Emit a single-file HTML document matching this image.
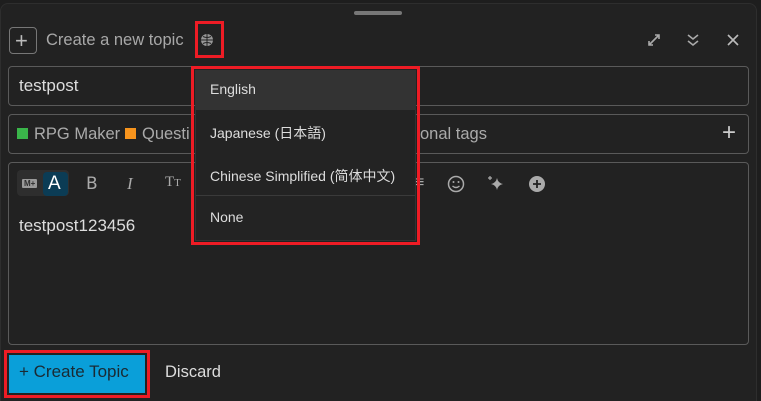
<!DOCTYPE html>
<html><head><meta charset="utf-8"><style>
*{box-sizing:border-box;margin:0;padding:0}
html,body{width:761px;height:401px;overflow:hidden}
body{background:#1e1e1e;font-family:"Liberation Sans","Noto Sans CJK SC",sans-serif;position:relative;color:#ddd}
.panel{position:absolute;left:0;top:3px;width:757px;height:406px;background:#222;border:1px solid #2e2e2e;border-radius:8px}
.abs{position:absolute}
.box{position:absolute;border:1px solid #5a5a5a;border-radius:4px}
.t{position:absolute;white-space:nowrap}
.red{position:absolute;border:3px solid #ee1c25}
</style></head><body>
<div class="panel"></div>
<div class="abs" style="left:354px;top:11px;width:48px;height:4px;background:#777;border-radius:2px"></div>
<div class="box" style="left:9px;top:27px;width:28px;height:27px;border-color:#777"></div>
<div class="t" style="left:15px;top:28px;font-size:22px;color:#bbb;font-weight:300">+</div>
<div class="t" style="left:46px;top:31px;font-size:16.5px;color:#a8a8a8">Create a new topic</div>
<svg class="abs" style="left:200px;top:33px" width="14" height="14" viewBox="0 0 14 14"><circle cx="7" cy="7" r="6" fill="#999"/><path d="M1 7h12M7 1v12M3 3.5q4 2 8 0M3 10.5q4-2 8 0" stroke="#222" stroke-width="1" fill="none"/></svg>
<div class="red" style="left:195px;top:21px;width:29px;height:37px"></div>
<svg class="abs" style="left:646px;top:32px" width="16" height="16" viewBox="0 0 16 16"><path d="M3 13L13 3M9 3h4v4M3 9v4h4" stroke="#aaa" stroke-width="1.6" fill="none"/></svg>
<svg class="abs" style="left:685px;top:32px" width="16" height="16" viewBox="0 0 16 16"><path d="M3 3l5 4 5-4M3 9l5 4 5-4" stroke="#aaa" stroke-width="1.6" fill="none"/></svg>
<svg class="abs" style="left:726px;top:33px" width="14" height="14" viewBox="0 0 14 14"><path d="M2 2l10 10M12 2L2 12" stroke="#bbb" stroke-width="1.6"/></svg>
<div class="box" style="left:8px;top:66px;width:741px;height:40px"></div>
<div class="t" style="left:19px;top:76px;font-size:17px;color:#ddd">testpost</div>
<div class="box" style="left:8px;top:114px;width:741px;height:40px"></div>
<div class="abs" style="left:17px;top:128px;width:11px;height:11px;background:#3ab54a"></div>
<div class="t" style="left:34px;top:125px;font-size:16.5px;color:#aaa">RPG Maker</div>
<div class="abs" style="left:125px;top:128px;width:11px;height:11px;background:#f7941d"></div>
<div class="t" style="left:142px;top:125px;font-size:16.5px;color:#aaa">Questi</div>
<div class="t" style="left:420px;top:125px;font-size:16.5px;color:#aaa">onal tags</div>
<div class="t" style="left:722px;top:119px;font-size:24px;color:#ccc;font-weight:300">+</div>
<div class="box" style="left:8px;top:162px;width:741px;height:183px"></div>
<div class="abs" style="left:17px;top:170px;width:52px;height:26px;background:#2e2e2e;border-radius:4px"></div>
<div class="t" style="left:22px;top:179px;font-size:8px;font-weight:bold;background:#999;color:#2e2e2e;padding:0 2px;border-radius:1px;line-height:9px">M+</div>
<div class="abs" style="left:43px;top:172px;width:25px;height:24px;background:#0b3c55;border-radius:4px"></div>
<div class="t" style="left:48px;top:173px;font-size:19px;color:#fff">A</div>
<div class="t" style="left:86px;top:174px;font-size:17px;color:#aaa;font-family:'DejaVu Sans'">B</div>
<div class="t" style="left:127px;top:174px;font-size:17px;color:#aaa;font-style:italic;font-family:'Liberation Serif'">I</div>
<div class="t" style="left:165px;top:174px;font-size:15px;color:#aaa;font-family:'Liberation Serif'">T<span style="font-size:11px">T</span></div>
<div class="t" style="left:415px;top:174px;font-size:16px;color:#aaa">≡</div>
<svg class="abs" style="left:447px;top:175px" width="18" height="18" viewBox="0 0 18 18"><circle cx="9" cy="9" r="7.5" stroke="#aaa" stroke-width="1.5" fill="none"/><circle cx="6.5" cy="7" r="1" fill="#aaa"/><circle cx="11.5" cy="7" r="1" fill="#aaa"/><path d="M5.5 11q3.5 3 7 0" stroke="#aaa" stroke-width="1.4" fill="none"/></svg>
<svg class="abs" style="left:487px;top:175px" width="18" height="18" viewBox="0 0 18 18"><path d="M10 3q1 5 6 6q-5 1-6 6q-1-5-6-6q5-1 6-6z" fill="#aaa"/><path d="M3 1v4M1 3h4" stroke="#aaa" stroke-width="1.2"/></svg>
<svg class="abs" style="left:528px;top:175px" width="18" height="18" viewBox="0 0 18 18"><circle cx="9" cy="9" r="8" fill="#aaa"/><path d="M9 5v8M5 9h8" stroke="#222" stroke-width="1.8"/></svg>
<div class="t" style="left:19px;top:216px;font-size:17px;color:#ddd">testpost123456</div>
<div class="abs" style="left:195px;top:70px;width:221px;height:171px;background:#232323;border:1px solid #333"></div>
<div class="abs" style="left:196px;top:71px;width:219px;height:39px;background:#333"></div>
<div class="t" style="left:210px;top:81px;font-size:14px;color:#ddd">English</div>
<div class="t" style="left:210px;top:123px;font-size:14px;color:#ddd">Japanese (日本語)</div>
<div class="t" style="left:210px;top:166px;font-size:14px;color:#ddd">Chinese Simplified (简体中文)</div>
<div class="abs" style="left:196px;top:195px;width:219px;height:1px;background:#3a3a3a"></div>
<div class="t" style="left:210px;top:209px;font-size:14px;color:#ddd">None</div>
<div class="red" style="left:191px;top:66px;width:229px;height:179px"></div>
<div class="abs" style="left:9px;top:355px;width:136px;height:38px;background:#0a9fd9"></div>
<div class="t" style="left:19px;top:362px;font-size:17px;color:#1a2a33">+ Create Topic</div>
<div class="red" style="left:4px;top:350px;width:146px;height:48px"></div>
<div class="t" style="left:165px;top:363px;font-size:16.5px;color:#ddd">Discard</div>
</body></html>
